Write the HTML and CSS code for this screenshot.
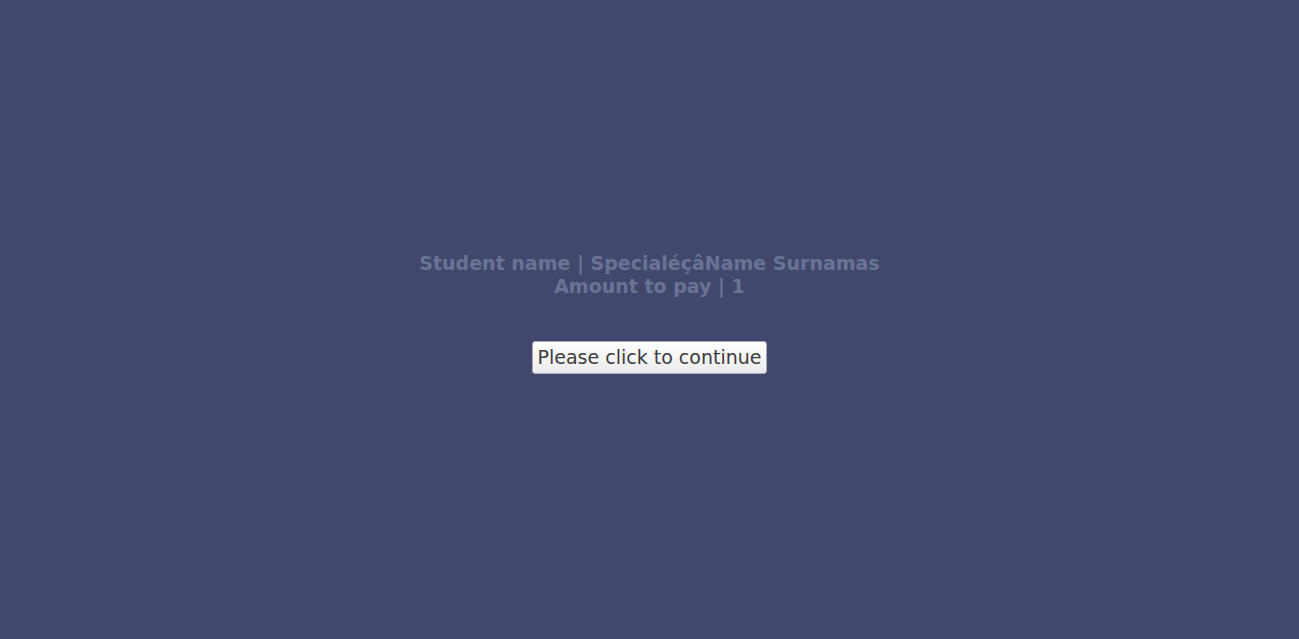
FILE: index.html
```html
<!DOCTYPE html>
<html>
<head>
<meta charset="utf-8">
<link rel="stylesheet" href="styles.css">
</head>
<body>
<main class="page">
  <div class="info">
    <div class="line">Student name | SpecialéçâName Surnamas</div>
    <div class="line">Amount to pay | 1</div>
  </div>
  <button class="continue">Please click to continue</button>
</main>
</body>
</html>
```
FILE: styles.css
```css
html, body {
  margin: 0;
  height: 100%;
  background: #42476d;
}
.page {
  box-sizing: border-box;
  height: 100%;
  padding-bottom: 14px;
  display: flex;
  flex-direction: column;
  align-items: center;
  justify-content: center;
  gap: 43px;
  font-family: "DejaVu Sans", sans-serif;
}
.info {
  text-align: center;
  color: #6a7396;
  font-weight: bold;
  font-size: 19px;
  line-height: 23px;
}
.continue {
  font-family: "DejaVu Sans", sans-serif;
  font-size: 19px;
  color: #3c3c3c;
  padding: 3px 5px 4px;
  height: 33px;
  border: 1px solid #a9a9b4;
  border-radius: 3px;
  background: linear-gradient(#ffffff, #ebebeb);
}
```
